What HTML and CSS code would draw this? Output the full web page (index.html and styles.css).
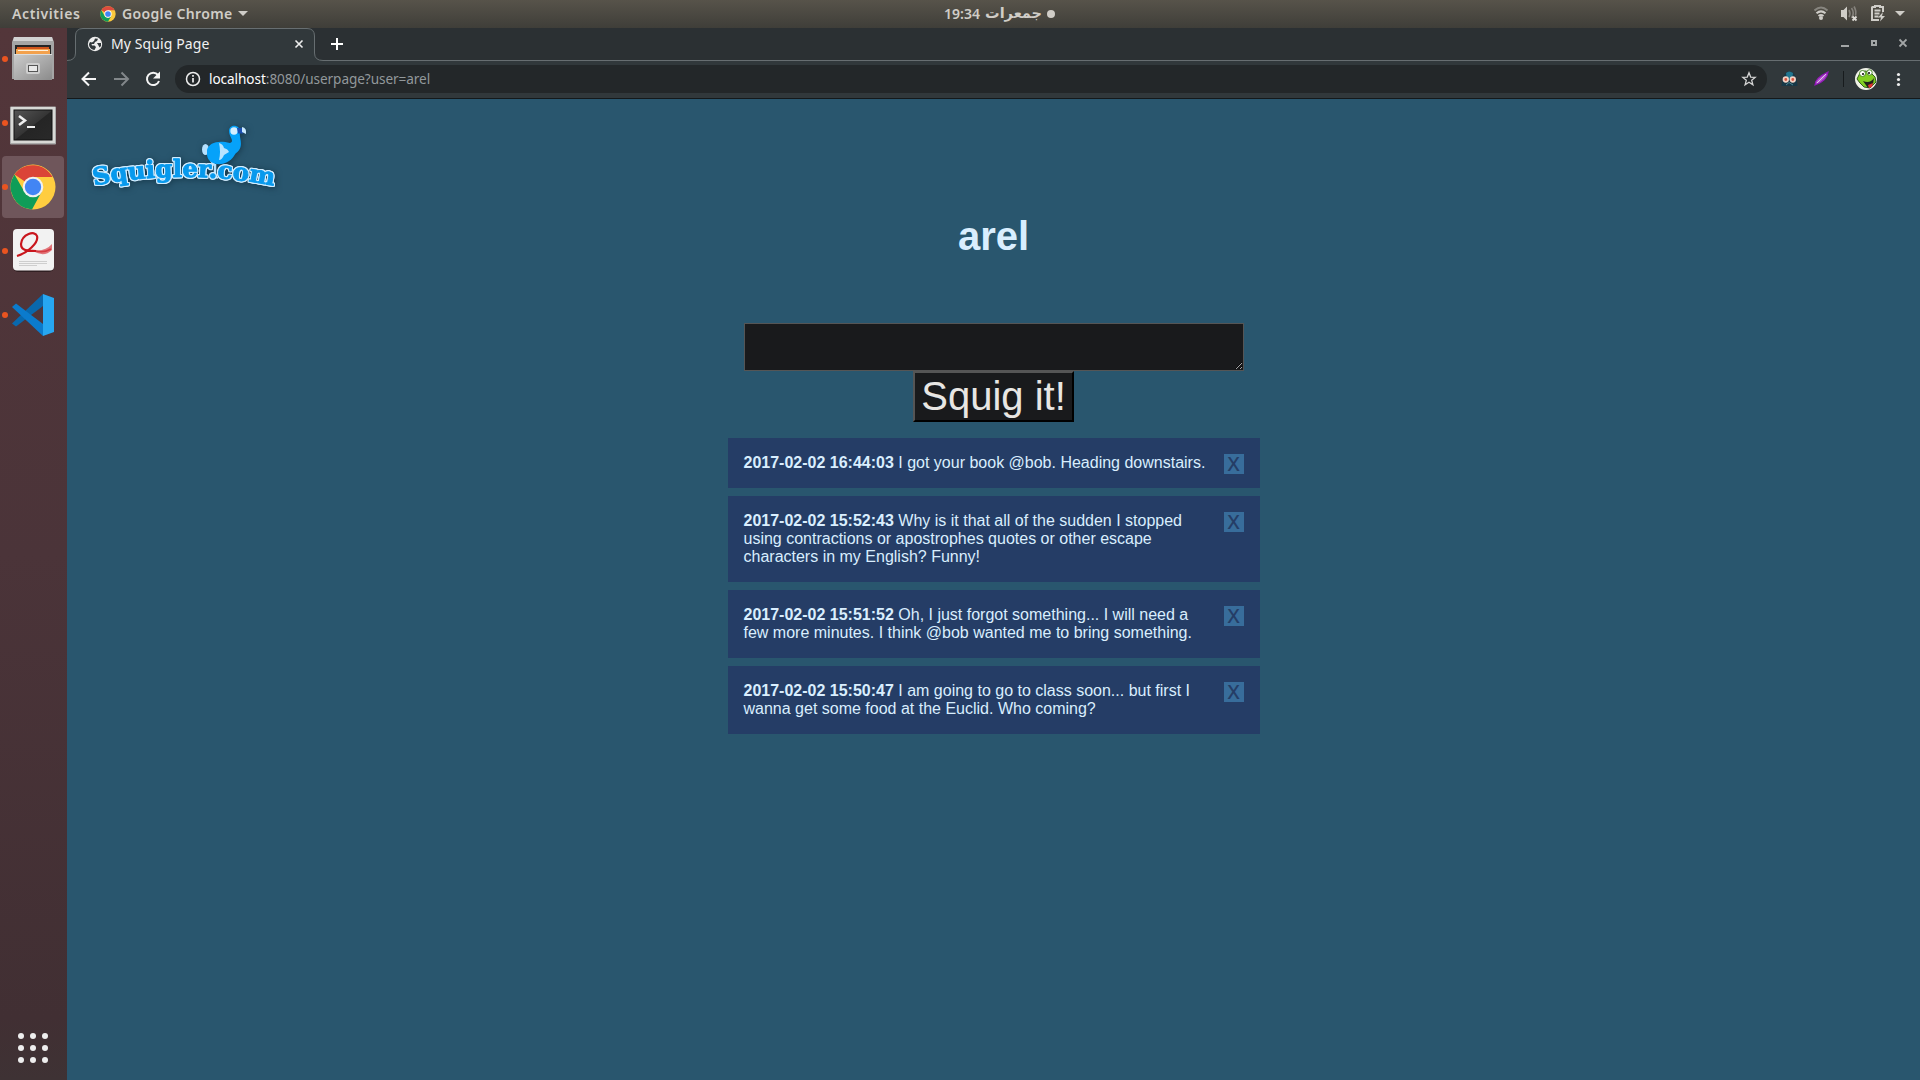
FILE: index.html
```html
<!DOCTYPE html>
<html lang="en">
<head>
<meta charset="utf-8">
<title>My Squig Page</title>
<link rel="stylesheet" href="styles.css">
</head>
<body>
<header class="topbar">
  <div class="topbar-left">
    <span class="activities">Activities</span>
    <svg class="mini-chrome" width="16" height="16" viewBox="0 0 48 48"><circle cx="24" cy="24" r="23" fill="#fbc93c"/><path d="M24 24L4 12.500A23 23 0 0 1 44 12.500H24z" fill="#dd4b3e"/><path d="M4 12.500A23 23 0 0 0 24 47L34 30 24 36 14 30z" fill="#0f9d58"/><circle cx="24" cy="24" r="11" fill="#fff"/><circle cx="24" cy="24" r="8.500" fill="#4285f4"/></svg>
    <span class="appname">Google Chrome</span>
    <svg class="caret" width="10" height="6"><path d="M0 0h10L5 5z" fill="#cfcdc8"/></svg>
  </div>
  <div class="clock"><span class="time">19:34</span><span class="day" lang="ur" dir="rtl">جمعرات</span><i class="clock-dot"></i></div>
  <svg class="tray" width="106" height="28" viewBox="1814 0 106 28">
    <g fill="none" stroke-width="2"><path d="M1814.500 10.500Q1821 4.500 1827.500 10.500" stroke="#87857f"/><path d="M1816.500 13.200Q1821 9.500 1825.500 13.200M1818.500 16Q1821 14 1823.500 16" stroke="#cfcdc8"/></g><circle cx="1821" cy="18" r="2" fill="#cfcdc8"/>
    <path d="M1841 10h2.500l3.500-3.500v14l-3.500-3.500h-2.500z" fill="#cfcdc8"/><path d="M1849 10q2 3.500 0 7M1851.500 8q3.500 5 0 10M1854 6.500q2.500 4 1.500 9" fill="none" stroke="#85827c" stroke-width="1.600"/><path d="M1852.500 16.500l4 4m0-4l-4 4" stroke="#dddbd6" stroke-width="1.800"/>
    <path d="M1872 7h3V6h5v1h3v5M1872 6.500V20h7" fill="none" stroke="#cfcdc8" stroke-width="2"/><path d="M1874.500 10.500h6M1874.500 13.500h5M1874.500 16.500h4" stroke="#cfcdc8" stroke-width="1.800"/><path d="M1883 12l-5 5.500h3l-1 4 5-5.500h-3z" fill="#cfcdc8"/>
    <path d="M1895 11h10l-5 5z" fill="#cfcdc8"/>
  </svg>
</header>
<div class="desktop">
  <nav class="dock">
    <div class="dock-item"><svg width="67" height="64">
      <defs><linearGradient id="metal" x1="0" y1="0" x2="1" y2="1"><stop offset="0" stop-color="#ccc"/><stop offset="1" stop-color="#8b8b8b"/></linearGradient><linearGradient id="screen" x1="0" y1="0" x2="1" y2="1"><stop offset="0" stop-color="#555"/><stop offset=".5" stop-color="#353535"/><stop offset=".52" stop-color="#252525"/><stop offset="1" stop-color="#292929"/></linearGradient></defs>
      <path d="M14 10h38l2 5v37H12V15z" fill="#a5a5a5"/><path d="M14 10h38l1 4H13z" fill="#d2d2d2"/><path d="M15 18h36v10H15z" fill="#252525"/><path d="M17 20h32v8H17z" fill="#cf551c"/><path d="M16 22h34v6H16z" fill="#f3a14d"/><path d="M18 23h30v1H18z" fill="#fff1dd"/><path d="M14 27h38v26H14z" fill="url(#metal)"/><path d="M14 27h38v1H14z" fill="#ddd"/><rect x="26" y="36" width="14" height="11" rx="2" fill="#cecece"/><rect x="28.500" y="38.500" width="9" height="6" fill="#e8e8e8" stroke="#555"/></svg></div>
    <div class="dock-item"><svg width="67" height="64"><rect x="10" y="15.500" width="46" height="38" rx="1" fill="#aaa"/><rect x="11" y="16" width="44" height="36" fill="#d8d9d6"/><rect x="14" y="19" width="38" height="30" fill="url(#screen)" stroke="#111"/><path d="M19 25l6 4.500-6 4.500" fill="none" stroke="#eee" stroke-width="2.500"/><path d="M27 36h8" stroke="#eee" stroke-width="2"/></svg></div>
    <div class="dock-item active"><svg width="67" height="64"><circle cx="33" cy="32" r="22.500" fill="#ffcd40"/><path d="M33 32L14.500 19.500A22.500 22.500 0 0 1 52.500 22H33z" fill="#db4437"/><path d="M14.500 19.500A22.500 22.500 0 0 0 32 54.500L41.500 37 33 42 24.500 37z" fill="#0f9d58"/><circle cx="33" cy="32" r="10.300" fill="#f1f1f1"/><circle cx="33" cy="32" r="8.200" fill="#4285f4"/></svg></div>
    <div class="dock-item"><svg width="67" height="64"><rect x="13" y="11" width="41" height="42" rx="5" fill="#301f22"/><rect x="13" y="10" width="41" height="41.500" rx="4" fill="#f2f2f2"/><path d="M19 42.500h28M19 44.500h28M19 46.500h18" stroke="#cecece" stroke-width="1"/><path d="M33 31Q45 33 52 25V31Q44 39 33 32z" fill="#e2757a"/><path d="M17 37C27 34 39 24 37 17C35 11 22 15 21 25C21 32 28 32 36 32" fill="none" stroke="#c9161d" stroke-width="2.200"/><path d="M36 32Q44 34 51 30" fill="none" stroke="#d43940" stroke-width="1.500"/></svg></div>
    <div class="dock-item"><svg width="67" height="64"><path d="M12 40.500l4 3L43 23V11z" fill="#0968ad"/><path d="M12 24l4-3.500L43 41v12z" fill="#0b7bcd"/><path d="M43 11l11 4v34l-11 4z" fill="#27a7f1"/></svg></div>
    <div class="apps"><i></i><i></i><i></i><i></i><i></i><i></i><i></i><i></i><i></i></div>
  </nav>
  <main class="browser">
    <div class="tabstrip">
      <svg class="tabshape" width="1853" height="33"><path d="M0 32.500Q8.500 32.500 8.500 25V8Q8.500 .5 16 .5H240Q247.500 .5 247.500 8V25Q247.500 32.500 256 32.500V33H0z" fill="#31383b"/><path d="M0 32.500Q8.500 32.500 8.500 25V8Q8.500 .5 16 .5H240Q247.500 .5 247.500 8V25Q247.500 32.500 256 32.500H1853" fill="none" stroke="#676e71"/></svg>
      <div class="tab"><svg width="16" height="16" viewBox="0 0 16 16"><circle cx="8" cy="8" r="7.200" fill="#eee"/><path d="M8 2.500l3 .2-1 2.300-2 1-1 2H4.500l.5 1.500 2.500 0 1.500 1.500-1.500 3C4 13.500 2 11 2 8l1-2 2 .5 2-1.500zM10 7h4v3l-1.500 1.500-1-2z" fill="#31383b"/></svg><span class="tab-title">My Squig Page</span><svg width="10" height="10"><path d="M1.500 1.500l7 7m0-7l-7 7" stroke="#eee" stroke-width="1.600"/></svg></div>
      <svg class="plus" width="12" height="12"><path d="M6 0v12M0 6h12" stroke="#fff" stroke-width="2"/></svg>
      <svg class="window-buttons" width="66" height="12"><path d="M0 9h8" stroke="#a3a6a7" stroke-width="2"/><path d="M31 4h4v4h-4z" fill="none" stroke="#a3a6a7" stroke-width="2"/><path d="M58.500 2.500l7 7m0-7l-7 7" stroke="#a3a6a7" stroke-width="1.800"/></svg>
    </div>
    <div class="toolbar">
      <svg class="nav-icons" width="80" height="16" fill="none" stroke-width="2"><path d="M15 8H2M8 1.500L1.500 8 8 14.500" stroke="#f5f5f5"/><path d="M33 8h13M40.500 1.500L47 8l-6.500 6.500" stroke="#82878a"/><path d="M77 4A6.200 6.200 0 1 0 78 10" stroke="#f5f5f5"/><path d="M79 .5v7h-7z" fill="#f5f5f5" stroke="none"/></svg>
      <div class="address"><svg width="16" height="16"><circle cx="8" cy="8" r="6.500" fill="none" stroke="#eee" stroke-width="1.500"/><path d="M8 7v4.500M8 4v1.800" stroke="#eee" stroke-width="1.700"/></svg><span class="url"><b>localhost</b>:8080/userpage?user=arel</span><svg class="star" width="16" height="16"><path d="M8 1.800l1.700 4.300 4.500.3-3.500 2.900 1.200 4.500L8 11.300l-3.900 2.500 1.200-4.500-3.500-2.900 4.500-.3z" fill="none" stroke="#d5d5d5" stroke-width="1.300"/></svg></div>
      <svg class="extensions" width="144" height="30" viewBox="1776 64 144 30">
        <path d="M1781.500 86q1-14 8-14.500 7 .5 8 14.500z" fill="#173847"/><path d="M1786 73q3-3 7 0l-1 7h-5z" fill="#237790"/><g fill="#d85540" stroke="#f3d2c4" stroke-width="1.700"><circle cx="1785.800" cy="79.500" r="2.300"/><circle cx="1792.800" cy="79.500" r="2.300"/></g><path d="M1786 85l3-2.500 4 2.500" stroke="#4e8795" fill="none"/>
        <path d="M1815 85q0-7 13-13-1 9-13 13z" fill="#b35acd" stroke="#9117b8" stroke-width="1.300"/><path d="M1817 83l9-9" stroke="#eed8f2" stroke-width=".8"/>
        <path d="M1843.500 71v16" stroke="#171b1d"/><circle cx="1866" cy="79" r="11" fill="#f0f2e7"/><path d="M1857 79l3-6 5-2 5 1 5 5 1 5-6 6-6-1-4-4z" fill="#82ce22" stroke="#335e1c"/><path d="M1863 81q7 3 11-3l-1 6-5 4z" fill="#20231a"/><path d="M1868 85l5-2-1 4-3 1z" fill="#e13232"/><circle cx="1862.500" cy="73.500" r="3" fill="#fff" stroke="#4b882c"/><circle cx="1869.500" cy="72.500" r="2.700" fill="#fff" stroke="#4b882c"/><circle cx="1863" cy="74" r="1"/><circle cx="1869" cy="73" r="1"/>
        <g fill="#eee"><circle cx="1898.500" cy="74.500" r="1.600"/><circle cx="1898.500" cy="79.500" r="1.600"/><circle cx="1898.500" cy="84.500" r="1.600"/></g>
      </svg>
    </div>
    <div class="page">
      <svg class="logo" width="200" height="80" viewBox="87 117 200 80">
        <path id="logo-arc" d="M94 185.500Q184 168 275 186" fill="none"/>
        <g class="logo-art"><path d="M211 160l4 6m0-2l0 12m-3-1l6 3" stroke="#b8e2fd" stroke-width="2.500" fill="none"/><ellipse cx="205.500" cy="149.500" rx="3.500" ry="5.500" fill="#b5e1ff"/><path d="M207 150C209 142 219 140 230 143C235 141 229 137 229 131C229 124 240 124 240 132C239 137 242 141 240.500 147C239 152 236 152 234 156C226 168 208 166 207 155z" fill="#06a2fa"/><path d="M219 143q4 1 5 5 4 1 5 4l-5 3q-2 5-5 5 2-8 0-17z" fill="#b8e4ff"/><circle cx="234" cy="131" r="3.700" fill="#d6eeff"/><path d="M237 128h6v5.500h-5z" fill="#1b4fb0"/><path d="M242 127q5 1 4 7l-4-2z" fill="#c9e9ff"/><text class="logo-text"><textPath href="#logo-arc" textLength="181" lengthAdjust="spacingAndGlyphs">Squigler.com</textPath></text></g>
      </svg>
      <h1 class="username">arel</h1>
      <form class="composer"><textarea class="squig-input" aria-label="Squig"></textarea><button class="squig-button" type="button">Squig it!</button></form>
      <section class="feed">
        <article class="squig"><p class="squig-text"><b>2017-02-02 16:44:03</b> I got your book @bob. Heading downstairs.</p><button class="remove" type="button">X</button></article>
        <article class="squig"><p class="squig-text"><b>2017-02-02 15:52:43</b> Why is it that all of the sudden I stopped using contractions or apostrophes quotes or other escape characters in my English? Funny!</p><button class="remove" type="button">X</button></article>
        <article class="squig"><p class="squig-text"><b>2017-02-02 15:51:52</b> Oh, I just forgot something... I will need a few more minutes. I think @bob wanted me to bring something.</p><button class="remove" type="button">X</button></article>
        <article class="squig"><p class="squig-text"><b>2017-02-02 15:50:47</b> I am going to go to class soon... but first I wanna get some food at the Euclid. Who coming?</p><button class="remove" type="button">X</button></article>
      </section>
    </div>
  </main>
</div>
</body>
</html>
```
FILE: styles.css
```css
* { box-sizing: border-box; }
html, body { height: 100%; overflow: hidden; }
body { margin: 0; display: flex; flex-direction: column; font-family: "Noto Sans", sans-serif; }
svg { display: block; flex: none; }

.topbar { height: 28px; flex: none; display: grid; grid-template-columns: 944px 1fr 106px; background: linear-gradient(#57534a, #3f3e39); color: #dfdbd2; font-size: 14px; line-height: 27px; white-space: nowrap; }
.topbar-left { display: flex; align-items: center; padding-left: 12px; height: 27px; }
.activities, .appname { font-weight: 600; color: #d0cdc7; }
.activities { width: 88px; font-size: 14px; letter-spacing: .6px; }
.appname { width: 116px; margin-left: 6px; font-size: 14px; letter-spacing: .35px; }
.clock { display: flex; align-items: center; height: 27px; color: #d0cdc7; font-size: 14px; font-weight: 600; }
.time { width: 41px; font-size: 14px; }
.day { width: 57px; font-family: "DejaVu Sans", sans-serif; font-weight: bold; font-size: 14.500px; }
.clock-dot { width: 8px; height: 8px; margin-left: 5px; border-radius: 50%; background: #d0cdc7; }

.desktop { flex: 1; min-height: 0; display: flex; }
.dock { width: 67px; display: flex; flex-direction: column; background: linear-gradient(#53363a, #4b3439 50%, #412f33 94%, #3e3234); }
.dock-item { position: relative; width: 67px; height: 64px; flex: none; }
.dock-item:first-child { height: 63px; }
.dock-item:first-child svg { margin-top: -1px; }
.dock-item svg { position: relative; }
.dock-item::after { content: ""; position: absolute; left: 2px; top: 29px; width: 6px; height: 6px; border-radius: 50%; background: #ea5420; }
.dock-item:first-child::after { top: 28px; }
.dock-item.active::before { content: ""; position: absolute; left: 2px; top: 1px; width: 62px; height: 62px; border-radius: 4px; background: #6f565b; }
.apps { display: grid; grid-template-columns: repeat(3, 6px); gap: 6px; margin: auto 0 17px 18px; }
.apps i { width: 6px; height: 6px; border-radius: 50%; background: #eee; }

.browser { flex: 1; min-width: 0; display: flex; flex-direction: column; }
.tabstrip { position: relative; height: 33px; flex: none; display: flex; align-items: center; background: #2b3033; }
.tabshape { position: absolute; left: 0; top: 0; }
.tab { position: relative; width: 248px; display: flex; align-items: center; padding: 0 11px 2px 20px; }
.tab-title { flex: 1; padding-left: 8px; color: #f2f2f2; font-size: 14px; line-height: 20px; letter-spacing: .1px; white-space: nowrap; }
.plus { position: relative; margin: -1px 0 0 16px; }
.window-buttons { position: relative; margin: -3px 13px 0 auto; }
.toolbar { height: 38px; flex: none; display: flex; align-items: center; padding-bottom: 1px; background: #31383b; border-bottom: 1px solid #14191b; }
.nav-icons { margin-left: 14px; }
.address { flex: 1; height: 28px; display: flex; align-items: center; margin: 0 9px 0 14px; padding: 0 10px; border-radius: 14px; background: #232729; }
.url { flex: 1; padding-left: 8px; color: #92989b; font-size: 13.600px; line-height: 28px; letter-spacing: -.07px; white-space: nowrap; }
.url b { color: #fff; font-weight: 400; }

.page { flex: 1; min-height: 0; display: flex; flex-direction: column; align-items: center; background: #29566e; color: #d9eefe; font: 16px/18px "Liberation Sans", Arial, sans-serif; }
.logo { align-self: flex-start; margin: 18px 0 0 20px; }
.logo-art { filter: drop-shadow(1px 1px 3px #17394c); }
.logo-text { font: bold 24px "DejaVu Serif", serif; fill: #0799ed; stroke: #0799ed; stroke-width: .9px; stroke-linejoin: round; filter: drop-shadow(1px 0 0 #d2edff) drop-shadow(-1px 0 0 #d2edff) drop-shadow(0 1px 0 #d2edff) drop-shadow(0 -1px 0 #d2edff); }
.username { margin: 16px 0 0; height: 46px; font-size: 40px; line-height: 46px; }
.composer { display: flex; flex-direction: column; align-items: center; margin-top: 64px; }
.squig-input { width: 500px; height: 48px; padding: 2px; resize: both; background: #191a1c; border: 1px solid #555; color: #eee; color-scheme: dark; }
.squig-button { width: 161px; height: 51px; padding: 0 0 1px; background: #191a1c; color: #e8e6e3; border: 2px solid; border-color: #555 #000 #000 #555; font: 40px/46px "Liberation Sans", Arial, sans-serif; }
.feed { width: 532px; display: flex; flex-direction: column; gap: 8px; margin-top: 16px; }
.squig { display: flex; justify-content: space-between; align-items: flex-start; padding: 16px; background: #253d66; }
.squig-text { width: 464px; margin: 0; }
.remove { width: 20px; height: 20px; margin: 0 0 -2px; padding: 0 0 1px; border: 0; background: #386d9b; color: #253d66; font: 500 20px/19px "Noto Sans", sans-serif; }
```
